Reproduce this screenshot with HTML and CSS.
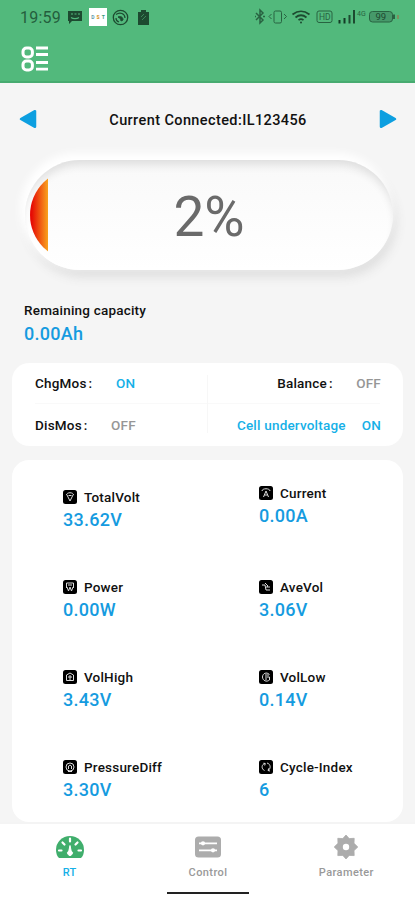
FILE: index.html
```html
<!DOCTYPE html>
<html lang="en">
<head>
<meta charset="utf-8">
<title>Battery monitor</title>
<link rel="stylesheet" href="styles.css">
</head>
<body>
<div class="app">
  <header class="header">
    <div class="status">
      <span class="clock">19:59</span>
      <svg class="s-msg" width="16" height="15" viewBox="0 0 16 15"><path d="M1 1h14v10H5l-3 3v-3H1z" fill="#1d4a30"/><path d="M4 4h2M7.5 4h2M11 4h2M4 7.5c2 1.5 6 1.5 8 0" stroke="#52b97c" stroke-width="1.1" fill="none"/></svg>
      <span class="s-app"><i>D</i><b>S</b><u>T</u></span>
      <svg class="s-ring" width="17" height="17" viewBox="0 0 17 17" fill="none" stroke="#1d4a30"><circle cx="8.5" cy="8.5" r="7.2" stroke-width="1.3"/><path d="M4 5.5c4-3 9-1 9 3.500M4 9c0 2 1 3.500 3 4" stroke-width="1.200"/><path d="M6 8c3-1 5 0 5 3l-2 1c0-2-1-3-3-4z" fill="#1d4a30"/></svg>
      <svg class="s-clip" width="11" height="15" viewBox="0 0 11 15"><path d="M0 2h3V0h5v2h3v13H0z" fill="#1d4a30"/><path d="M3 7l3-3M4 10l4-4" stroke="#3b8659"/></svg>
      <span class="space"></span>
      <svg class="s-right" width="150" height="18" viewBox="0 0 150 18" fill="none" stroke="#286341">
        <path d="M1 5l7 7-3 3V2l3 3-7 7M0 8.500h1M8 8.500h2" stroke-width="1.500"/>
        <rect x="19" y="3" width="7.500" height="12" rx="1.500"/><path d="M16.500 6L14 8.500l2.500 2.500M29 6l2.500 2.500L29 11"/>
        <path d="M37.500 6.500q8.500-6.500 17 0M40.500 9.500q5.500-4.500 11 0M43.500 12.200q2.500-2 5 0" stroke="#1d4a30" stroke-width="1.700"/><circle cx="46" cy="14.500" r="1" fill="#1d4a30" stroke="none"/>
        <rect x="62" y="3" width="15" height="11.500" rx="2"/>
        <text x="64" y="12" class="hd">HD</text>
        <path d="M84.500 12v3.500M89.500 10v5.500" stroke="#123b25" stroke-width="2"/><path d="M94.500 7v8.500M99 2v13.500" stroke="#1d4a30" stroke-width="2"/>
        <text x="102" y="8" class="net">4G</text>
        <rect x="114.500" y="3.500" width="23" height="10.500" rx="3" fill="#46996a"/><path d="M139 6.500v4.500" stroke-width="2"/><path d="M143 7v4" stroke="#95794f" stroke-width="1.300"/>
        <text x="120.500" y="12" class="bat">99</text>
      </svg>
    </div>
    <svg class="menu" width="28" height="26" viewBox="0 0 28 26" fill="none" stroke="#fff"><rect x="2" y="2" width="9.400" height="9" rx="3.500" stroke-width="3"/><rect x="2" y="15" width="9.400" height="9" rx="3.500" stroke-width="3"/><path d="M15 2h12M15 8.500h12M15 16.500h12M15 23.200h12" stroke-width="2.800"/></svg>
  </header>

  <main class="content">
    <div class="device">
      <svg width="18" height="20" viewBox="0 0 18 20"><path d="M2 10L16 2.200V17.800z" fill="#0d9fe0" stroke="#0d9fe0" stroke-width="2.500" stroke-linejoin="round"/></svg>
      <span class="device-name">Current Connected:IL123456</span>
      <svg width="18" height="20" viewBox="0 0 18 20"><path d="M16 10L2 2.200V17.800z" fill="#0d9fe0" stroke="#0d9fe0" stroke-width="2.500" stroke-linejoin="round"/></svg>
    </div>

    <div class="gauge">
      <div class="track"><div class="fill"></div></div>
      <span class="percent">2%</span>
    </div>

    <div class="capacity">
      <div class="cap-label">Remaining capacity</div>
      <div class="value">0.00Ah</div>
    </div>

    <section class="card switches">
      <div class="sw"><span class="sw-name w1">ChgMos<em>:</em></span><span class="state on">ON</span></div>
      <div class="sw right"><span class="sw-name w3">Balance<em>:</em></span><span class="state">OFF</span></div>
      <div class="sw"><span class="sw-name w2">DisMos<em>:</em></span><span class="state">OFF</span></div>
      <div class="sw right"><span class="alarm">Cell undervoltage</span><span class="state on">ON</span></div>
    </section>

    <section class="card metrics">
      <div class="metric"><div class="name"><svg viewBox="0 0 14 14"><rect width="14" height="14" rx="2.500"/><path d="M4 5l3 6 3-6M3.500 5c0-3 7-3 7 0M5.500 5.500h3"/></svg><span>TotalVolt</span></div><div class="value">33.62V</div></div>
      <div class="metric raised"><div class="name"><svg viewBox="0 0 14 14"><rect width="14" height="14" rx="2.500"/><path d="M3 5c0-3 8-3 8 0M4.500 11L7 5l2.500 6M5.500 9h3"/></svg><span>Current</span></div><div class="value">0.00A</div></div>
      <div class="metric"><div class="name"><svg viewBox="0 0 14 14"><rect width="14" height="14" rx="2.500"/><path d="M3.500 8V3h7v5M4 7l1.500 4L7 7l1.500 4L10 7M5 5h4"/></svg><span>Power</span></div><div class="value">0.00W</div></div>
      <div class="metric"><div class="name"><svg viewBox="0 0 14 14"><rect width="14" height="14" rx="2.500"/><path d="M3 5h3l1 5h4M6 3l3 3-3 2M8 7h3"/></svg><span>AveVol</span></div><div class="value">3.06V</div></div>
      <div class="metric"><div class="name"><svg viewBox="0 0 14 14"><rect width="14" height="14" rx="2.500"/><path d="M3.500 10.500V5L7 3l3.500 2v5.500zM5 7h4M7 5v5"/></svg><span>VolHigh</span></div><div class="value">3.43V</div></div>
      <div class="metric"><div class="name"><svg viewBox="0 0 14 14"><rect width="14" height="14" rx="2.500"/><path d="M10.500 4.500c-3-3-7-1-7 2.500s4 5.500 7 3V7H6M6 5h4M6 9h2"/></svg><span>VolLow</span></div><div class="value">0.14V</div></div>
      <div class="metric"><div class="name"><svg viewBox="0 0 14 14"><rect width="14" height="14" rx="2.500"/><circle cx="7" cy="7" r="4"/><path d="M5.500 9V6L7 5l1.500 1v3M5 11.500h4"/></svg><span>PressureDiff</span></div><div class="value">3.30V</div></div>
      <div class="metric"><div class="name"><svg viewBox="0 0 14 14"><rect width="14" height="14" rx="2.500"/><path d="M5.500 10.500C2 9 2.500 4 6 3.500M8 3c4 1 4 6 1 7.500M4.500 3.200L6.300 3.500 5.700 5.500M9.800 8.300L9 10.500l2 .5"/></svg><span>Cycle-Index</span></div><div class="value">6</div></div>
    </section>
  </main>

  <nav class="tabs">
    <div class="tab active">
      <svg width="30" height="24" viewBox="0 0 30 24"><path d="M4 23Q1 20 1 15a14 14 0 0 1 28 0q0 5-3 8z" fill="#40ae6c"/><path d="M15 3.500v3M7.500 7.500l2 2M22.500 7.500l-2 2M4 15.500h2.500M23.500 15.500H26" stroke="#fff" stroke-width="2.200" stroke-linecap="round"/><path d="M15 10.500l1.200 5.500a2.400 2.400 0 1 1-2.400 0z" fill="#fff" stroke="#fff"/></svg>
      <span>RT</span>
    </div>
    <div class="tab">
      <svg width="30" height="24" viewBox="0 0 30 24"><rect x="2" y="1.500" width="26" height="21" rx="3.500" fill="#acacac"/><path d="M6 8.300h18M6 15.300h18" stroke="#fff" stroke-width="1.800"/><circle cx="10" cy="8.300" r="2.100" fill="#fff"/><circle cx="20" cy="15.300" r="2.100" fill="#fff"/></svg>
      <span>Control</span>
    </div>
    <div class="tab">
      <svg width="30" height="24" viewBox="0 0 30 24"><path d="M15 0l3.200 3.600 5-.3-.2 5L26.800 12 23 15.600l.2 5-5-.2L15 24l-3.200-3.600-5 .2.200-5L3.200 12 7 8.300l-.2-5 5 .3z" fill="#acacac" stroke="#acacac" stroke-width=".8" stroke-linejoin="round"/><circle cx="15" cy="12" r="3.200" fill="#fff"/></svg>
      <span>Parameter</span>
    </div>
    <div class="home"></div>
  </nav>
</div>
</body>
</html>
```

FILE: styles.css
```css
* { box-sizing: border-box; }
body { margin: 0; background: #f5f5f5; font-family: Roboto, "Liberation Sans", sans-serif; color: #111; }
svg { display: block; flex: none; }
.app { width: 415px; height: 900px; display: flex; flex-direction: column; overflow: hidden; }

.header { height: 83px; flex: none; background: #52b97c; border-bottom: 2px solid #47ab70; }
.status { display: flex; align-items: center; height: 34px; padding: 0 13px 0 20px; }
.clock { width: 47px; font-size: 16px; letter-spacing: .2px; color: #245e3d; }
.s-msg { margin-right: 6px; }
.s-app { display: flex; align-items: center; justify-content: center; gap: 2px; width: 18px; height: 18px; background: #fff; font-size: 5px; font-weight: 700; margin-right: 5px; }
.s-app i { font-style: normal; color: #5f9aab; }
.s-app b { color: #d79a32; }
.s-app u { text-decoration: none; color: #3a9b78; }
.s-ring { margin-right: 9px; }
.space { flex: 1; }
.s-right { margin-right: -3px; }
.hd { font-size: 8.500px; fill: #286341; stroke: none; }
.net { font-size: 7px; fill: #286341; stroke: none; }
.bat { font-size: 9.500px; fill: #1d4a30; stroke: none; }
.menu { margin: 12px 0 0 21px; }

.content { flex: 1; min-height: 0; overflow: hidden; padding: 0 12px; }
.device { display: flex; justify-content: space-between; align-items: center; height: 20px; margin: 26px 6px 0 7px; }
.device-name { font-size: 14.500px; font-weight: 500; letter-spacing: .4px; white-space: nowrap; padding-top: 2px; }

.gauge { display: grid; margin: 31px 10px 0 13px; height: 110px; border-radius: 55px; background: linear-gradient(#f9f9f9, #fff); box-shadow: inset 0 8px 9px -3px #dedede, inset 5px 0 3px -1px #fff, -3px -5px 9px 2px #fff, 3px 7px 11px #dedede; }
.gauge > * { grid-area: 1 / 1; }
.track { margin: 9px 5px; border-radius: 46px; overflow: hidden; }
.fill { width: 18px; height: 100%; background: linear-gradient(90deg, #e60b05 10%, #f9a21d); }
.percent { place-self: center; font-size: 55px; line-height: 60px; color: #6a6a6a; font-weight: 400; padding: 4px 0 0; }

.capacity { margin: 32px 12px 0; }
.cap-label { font-size: 13.500px; line-height: 16px; font-weight: 500; letter-spacing: .2px; }
.value { font-size: 18px; line-height: 22px; font-weight: 500; color: #159be0; letter-spacing: .25px; }
.capacity .value { margin-top: 5px; }

.card { background: #fff; border-radius: 17px; }
.switches { display: grid; grid-template-columns: 1fr 1fr; grid-template-rows: 40px 43px; margin-top: 18px; height: 83px; padding: 0 22px 0 23px; background: linear-gradient(#f7f7f7, #f7f7f7) 50% 12px / 1px 58px no-repeat, linear-gradient(#f9f9f9, #f9f9f9) 50% 40px / 345px 1px no-repeat, #fff; }
.sw { display: flex; align-items: center; font-size: 13.500px; font-weight: 500; letter-spacing: .2px; white-space: nowrap; }
.sw.right { justify-content: flex-end; }
.sw-name em { font-style: normal; margin-left: 2px; }
.w1 { width: 81px; }
.w2 { width: 76px; }
.w3 { width: 79px; }
.state { color: #969696; }
.on, .alarm { color: #16b0e7; }
.alarm { margin-right: 16px; }

.metrics { display: grid; grid-template-columns: 196px 1fr; grid-auto-rows: 90px; margin-top: 14px; padding: 28px 0 0 51px; height: 362px; }
.raised { margin-top: -4px; }
.name { display: flex; align-items: center; height: 17px; gap: 7px; font-size: 13.500px; font-weight: 500; letter-spacing: .2px; }
.name svg { width: 14px; height: 14px; }
.name path, .name circle { fill: none; stroke: #ddd; stroke-width: 1; }
.metric .value { margin-top: 4px; }

.tabs { position: relative; height: 78px; flex: none; display: grid; grid-template-columns: repeat(3, 1fr); background: #fff; border-top: 2px solid #f4f4f4; }
.tab { display: flex; flex-direction: column; align-items: center; padding: 11px 0 0 1px; font-size: 11px; font-weight: 500; letter-spacing: .4px; color: #999; }
.tab span { line-height: 14px; margin-top: 7px; }
.tab.active { color: #16b0e7; }
.home { position: absolute; left: 167px; bottom: 6px; width: 82px; height: 2px; background: #222; }
```
